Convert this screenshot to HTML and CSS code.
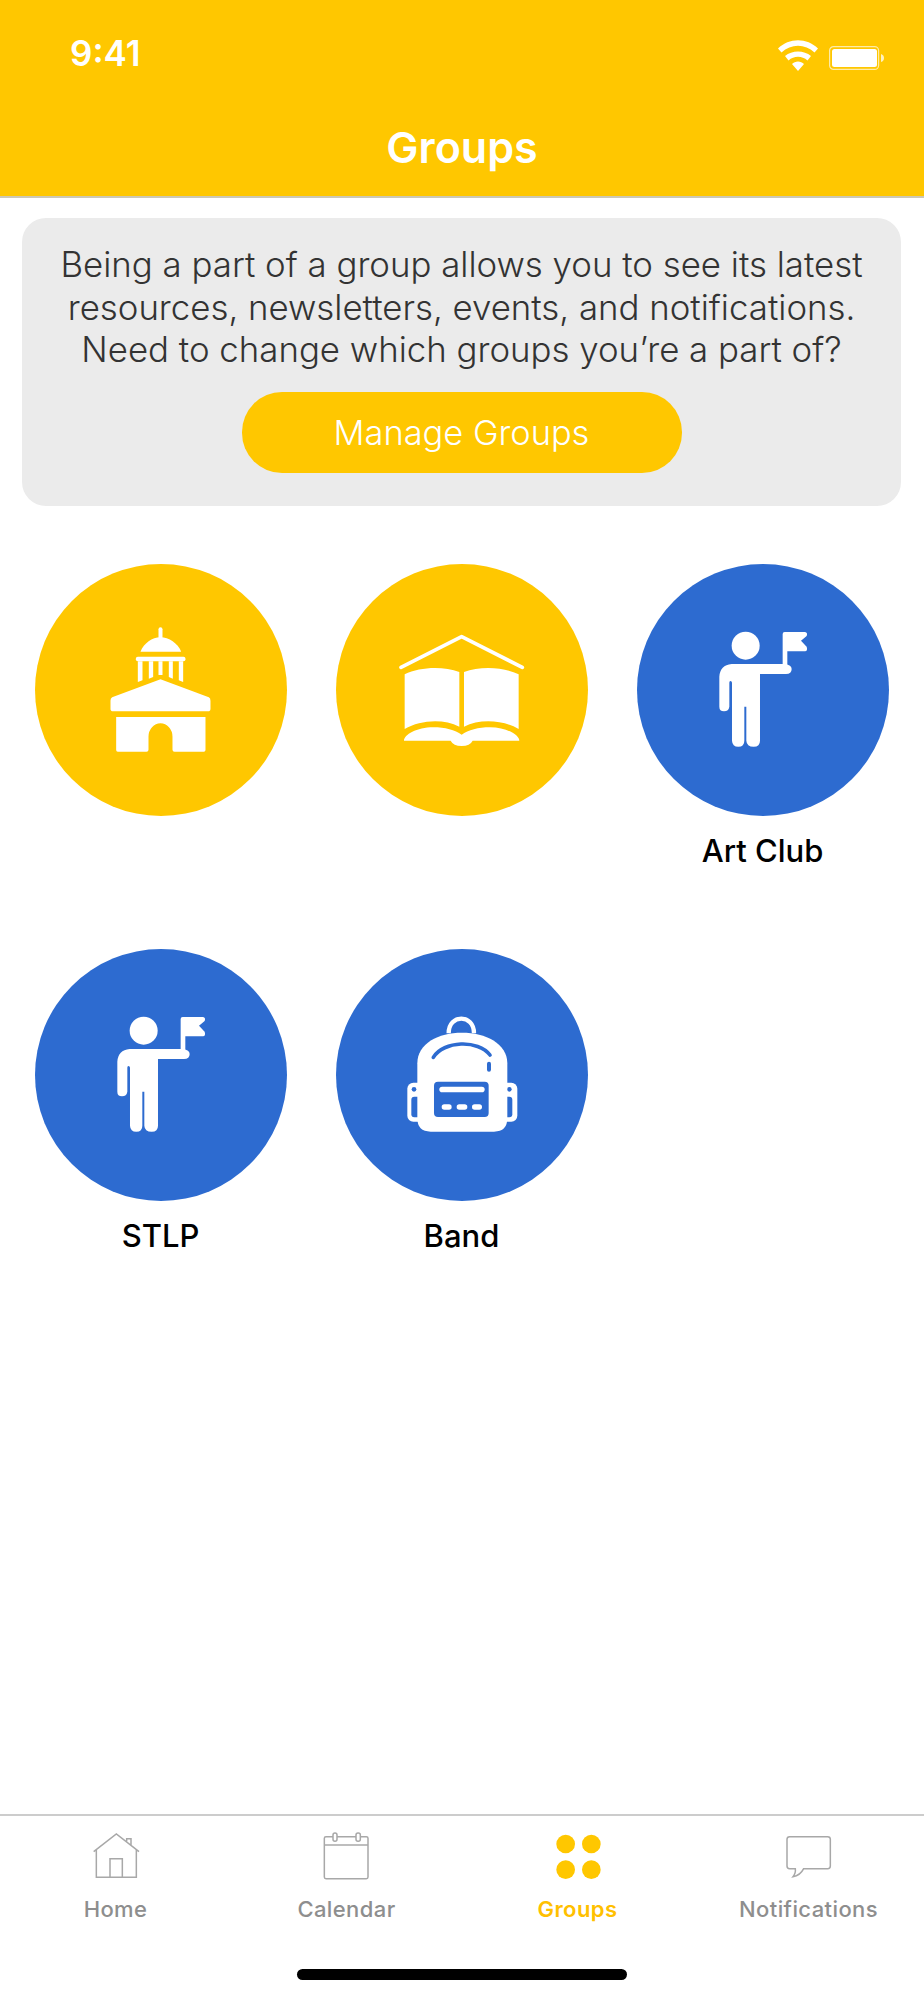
FILE: index.html
```html
<!DOCTYPE html>
<html lang="en">
<head>
<meta charset="utf-8">
<title>Groups</title>
<link rel="stylesheet" href="styles.css">
</head>
<body>
<div class="app">
  <header class="header">
    <div class="status">
      <span class="time">9:41</span>
      <span class="status-icons">
        <svg class="wifi" viewBox="0 0 40 32"><path d="M0 9.5 C11 -1.5 29 -1.5 40 9.5 L36.5 13.5 C27 4.5 13 4.5 3.5 13.5Z M7 17 C14 11 26 11 33 17 L29.5 21.5 C24 16.5 16 16.5 10.5 21.5Z M14 25 C17 21.5 23 21.5 26 25 L20 32Z" fill="#fff"/></svg>
        <svg class="battery" viewBox="0 0 55 24"><rect x="0.6" y="0.6" width="49" height="22.8" rx="4" fill="none" stroke="#fff" stroke-opacity=".65" stroke-width="1.2"/><rect x="3" y="3" width="45" height="18" rx="2.5" fill="#fff"/><path d="M52 8 Q55 9 55 12 Q55 15 52 16Z" fill="#fff" fill-opacity=".75"/></svg>
      </span>
    </div>
    <h1 class="title">Groups</h1>
  </header>

  <main class="main">
    <section class="card">
      <p class="card-text">Being a part of a group allows you to see its latest<br>resources, newsletters, events, and notifications.<br>Need to change which groups you’re a part of?</p>
      <button class="manage">Manage Groups</button>
    </section>

    <section class="grid">
      <div class="cell">
        <div class="circle yellow">
          <svg class="glyph" viewBox="0 0 252 252"><g transform="translate(45.5 36) scale(.3333)" fill="#fff">
            <rect x="234" y="82" width="12" height="40" rx="6"/>
            <path d="M180 155 C190 130 215 112 240 112 C265 112 292 130 302 155Z"/>
            <rect x="166" y="170" width="149" height="14" rx="6"/>
            <path d="M172 184H186V241L172 246Z M205 184H218V231L205 236Z M234 184H246V225H234Z M265 184H277V236L265 231Z M295 184H308V246L295 241Z"/>
            <path d="M240 238 L385 292 Q390 295 390 302 V326 Q390 334 382 334 H98 Q90 334 90 326 V302 Q90 295 95 292Z"/>
            <path d="M107 351 H375 V450 Q375 455 370 455 H282 Q276 455 276 449 V410 A36 40 0 0 0 204 410 V449 Q204 455 198 455 H112 Q107 455 107 450Z"/>
          </g></svg>
        </div>
      </div>
      <div class="cell">
        <div class="circle yellow">
          <svg class="glyph" viewBox="0 0 252 252"><g transform="translate(44 46) scale(.3333)" fill="#fff">
            <path d="M63 172 L245 80 L427 172" fill="none" stroke="#fff" stroke-width="11" stroke-linecap="round" stroke-linejoin="round"/>
            <path d="M74 193 C120 170 190 168 238 186 V350 C190 325 120 330 74 357Z"/>
            <path d="M252 186 C300 168 370 170 416 193 V357 C370 330 300 325 252 350Z"/>
            <path d="M72 392 C72 375 110 352 160 352 C195 352 225 360 245 374 C265 360 295 352 330 352 C380 352 418 375 418 392 H278 Q270 408 245 408 Q220 408 212 392Z"/>
          </g></svg>
        </div>
      </div>
      <div class="cell">
        <div class="circle blue">
          <svg class="glyph" viewBox="0 0 252 252"><g transform="translate(53 46) scale(.3333)" fill="#fff">
            <circle cx="167" cy="107" r="42"/>
            <path d="M278 72 Q278 66 284 66 H345 Q354 68 350 78 L333 92 L350 110 Q354 122 345 124 H292 V170 H278Z"/>
            <path d="M125 162 H285 Q305 165 305 177 Q305 192 288 192 H210 V392 Q210 410 191 410 Q170 410 169 392 V290 H163 V392 Q163 410 145 410 Q127 410 126 392 V218 Q126 213 121 213 Q118 213 118 218 V290 Q116 304 102 304 Q88 304 88 290 V200 Q90 165 125 162Z"/>
          </g></svg>
        </div>
        <span class="label">Art Club</span>
      </div>
      <div class="cell">
        <div class="circle blue">
          <svg class="glyph" viewBox="0 0 252 252"><g transform="translate(53 46) scale(.3333)" fill="#fff">
            <circle cx="167" cy="107" r="42"/>
            <path d="M278 72 Q278 66 284 66 H345 Q354 68 350 78 L333 92 L350 110 Q354 122 345 124 H292 V170 H278Z"/>
            <path d="M125 162 H285 Q305 165 305 177 Q305 192 288 192 H210 V392 Q210 410 191 410 Q170 410 169 392 V290 H163 V392 Q163 410 145 410 Q127 410 126 392 V218 Q126 213 121 213 Q118 213 118 218 V290 Q116 304 102 304 Q88 304 88 290 V200 Q90 165 125 162Z"/>
          </g></svg>
        </div>
        <span class="label">STLP</span>
      </div>
      <div class="cell">
        <div class="circle blue">
          <svg class="glyph" viewBox="0 0 252 252"><g transform="translate(54 51) scale(.3333)">
            <path d="M176 100 C176 70 195 56 214 56 C233 56 252 70 252 100" fill="none" stroke="#fff" stroke-width="13"/>
            <rect x="52" y="248" width="330" height="117" rx="18" fill="#fff"/>
            <rect x="64" y="290" width="30" height="62" rx="9" fill="#2d6bd0"/>
            <rect x="340" y="290" width="27" height="62" rx="9" fill="#2d6bd0"/>
            <circle cx="72" cy="268" r="7" fill="#2d6bd0"/>
            <circle cx="358" cy="268" r="7" fill="#2d6bd0"/>
            <path d="M82 190 C82 130 145 98 216 98 C287 98 352 130 352 190 V355 Q352 395 312 395 H122 Q82 395 82 355Z" fill="#fff"/>
            <path d="M130 172 C160 122 265 118 300 165" fill="none" stroke="#2d6bd0" stroke-width="11" stroke-linecap="round"/>
            <path d="M297 191 V209" fill="none" stroke="#2d6bd0" stroke-width="12" stroke-linecap="round"/>
            <rect x="132" y="245" width="164" height="106" rx="12" fill="#2d6bd0"/>
            <rect x="148" y="260" width="136" height="17" rx="8.5" fill="#fff"/>
            <rect x="155" y="313" width="30" height="16" rx="8" fill="#fff"/>
            <rect x="200" y="313" width="32" height="16" rx="8" fill="#fff"/>
            <rect x="246" y="313" width="30" height="16" rx="8" fill="#fff"/>
          </g></svg>
        </div>
        <span class="label">Band</span>
      </div>
    </section>
  </main>

  <nav class="tabbar">
    <div class="tabs">
      <div class="tab">
        <svg class="tab-icon" viewBox="255 90 180 162"><path d="M278 155 L346 102 L414 155 M377 124 V116 H390 V135 M286 148 V232 H406 V148 M327 232 V176 H364 V232" fill="none" stroke="#a8a8a8" stroke-width="4.5"/></svg>
        <span class="tab-label">Home</span>
      </div>
      <div class="tab">
        <svg class="tab-icon" viewBox="948 90 180 162"><rect x="970" y="110" width="131" height="126" rx="5" fill="none" stroke="#a8a8a8" stroke-width="4.5"/><path d="M970 135 H1101" stroke="#a8a8a8" stroke-width="4.5"/><rect x="996" y="99" width="12" height="25" rx="6" fill="#fff" stroke="#a8a8a8" stroke-width="4.5"/><rect x="1065" y="99" width="13" height="25" rx="6" fill="#fff" stroke="#a8a8a8" stroke-width="4.5"/></svg>
        <span class="tab-label">Calendar</span>
      </div>
      <div class="tab active">
        <svg class="tab-icon" viewBox="255 90 180 162" fill="#ffc700"><circle cx="308" cy="132" r="28"/><circle cx="385" cy="132" r="28"/><circle cx="308" cy="209" r="28"/><circle cx="385" cy="209" r="28"/></svg>
        <span class="tab-label">Groups</span>
      </div>
      <div class="tab">
        <svg class="tab-icon" viewBox="948 90 180 162"><path d="M980 110 H1094 Q1102 110 1102 118 V198 Q1102 206 1094 206 H1022 C1015 220 1005 228 990 230 C997 222 998 214 997 206 H980 Q972 206 972 198 V118 Q972 110 980 110Z" fill="none" stroke="#a8a8a8" stroke-width="4.5"/></svg>
        <span class="tab-label">Notifications</span>
      </div>
    </div>
    <div class="home-indicator"></div>
  </nav>
</div>
</body>
</html>
```

FILE: styles.css
```css
* { box-sizing: border-box; }
html, body { margin: 0; padding: 0; background: #fff; }
body { font-family: Inter, "Liberation Sans", sans-serif; }

.app {
  width: 924px;
  height: 2000px;
  display: flex;
  flex-direction: column;
  overflow: hidden;
}

.header {
  height: 198px;
  flex: none;
  background: #ffc700;
  border-bottom: 2px solid #cdc8b4;
  color: #fff;
}
.status {
  height: 122px;
  padding: 32px 40px 0 70px;
  display: flex;
  justify-content: space-between;
  align-items: flex-start;
}
.time {
  font-size: 35px;
  line-height: 42px;
  font-weight: 600;
}
.status-icons {
  display: flex;
  align-items: flex-start;
  gap: 11px;
  padding-top: 7px;
}
.wifi { width: 40px; height: 32px; display: block; }
.battery { width: 55px; height: 24px; display: block; margin-top: 7px; }
.title {
  margin: 0;
  font-size: 43px;
  line-height: 50px;
  font-weight: 600;
  text-align: center;
}

.main { flex: 1; }

.card {
  margin: 20px 23px 0 22px;
  height: 288px;
  padding-top: 25px;
  background: #ebebeb;
  border-radius: 24px;
  display: flex;
  flex-direction: column;
  align-items: center;
}
.card-text {
  margin: 0;
  font-size: 34.8px;
  line-height: 42.5px;
  font-weight: 300;
  color: #333;
  text-align: center;
  white-space: nowrap;
}
.manage {
  margin-top: 21.5px;
  width: 440px;
  height: 81px;
  border: 0;
  border-radius: 40px;
  background: #ffc700;
  color: #fff;
  font-family: inherit;
  font-size: 34.4px;
  font-weight: 300;
}

.grid {
  margin-top: 58px;
  padding-left: 34.5px;
  display: grid;
  grid-template-columns: repeat(3, 252px);
  grid-auto-rows: 304px;
  column-gap: 49px;
  row-gap: 81px;
}
.cell {
  display: flex;
  flex-direction: column;
  align-items: center;
}
.circle {
  width: 252px;
  height: 252px;
  border-radius: 50%;
}
.glyph { width: 252px; height: 252px; display: block; }
.yellow { background: #ffc700; }
.blue { background: #2d6bd0; }
.label {
  margin-top: 18px;
  font-size: 31px;
  line-height: 34px;
  font-weight: 450;
  color: #000;
}

.tabbar {
  flex: none;
  height: 186px;
  border-top: 2px solid #cccccc;
  background: #fff;
}
.tabs {
  display: grid;
  grid-template-columns: repeat(4, 231px);
  padding-top: 14px;
}
.tab {
  display: flex;
  flex-direction: column;
  align-items: center;
  color: #8e8e8e;
}
.tab-icon { width: 60px; height: 54px; display: block; }
.tab-label {
  margin-top: 12px;
  font-size: 22px;
  line-height: 26px;
  font-weight: 450;
  letter-spacing: .4px;
}
.active { color: #ffc000; }
.active .tab-label { font-weight: 600; }

.home-indicator {
  width: 330px;
  height: 11px;
  margin: 47px auto 0;
  border-radius: 6px;
  background: #000;
}
```
